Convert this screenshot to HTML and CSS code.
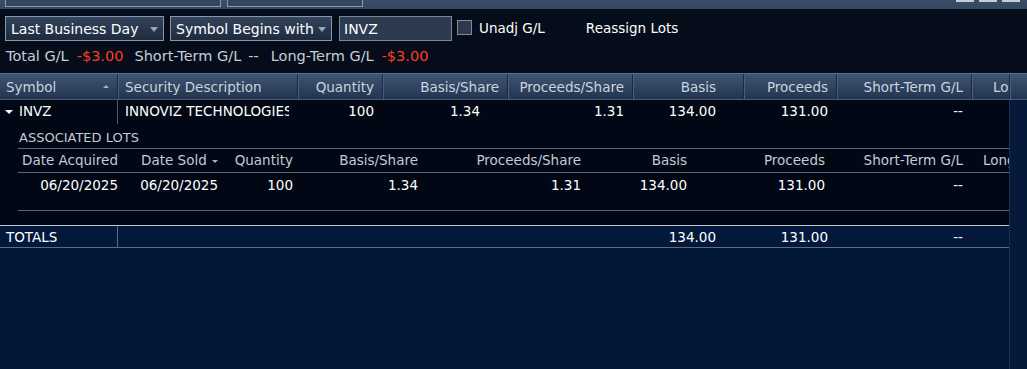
FILE: index.html
```html
<!DOCTYPE html>
<html lang="en">
<head>
<meta charset="utf-8">
<title>Realized G/L</title>
<link rel="stylesheet" href="styles.css">
</head>
<body>
<div class="topbar">
	<div class="tab t1"></div>
	<div class="tab t2"></div>
	<div class="winbtns"><i></i><i></i><i></i></div>
</div>

<div class="toolbar">
	<div class="dd dd1">Last Business Day <b class="caret"></b></div>
	<div class="dd dd2">Symbol Begins with <b class="caret"></b></div>
	<div class="txt">INVZ</div>
	<label class="chk"><i></i> Unadj G/L</label>
	<span class="link">Reassign Lots</span>
</div>

<div class="summary">
	<span>Total G/L</span><em>-$3.00</em>
	<span>Short-Term G/L</span><span class="dash">--</span>
	<span>Long-Term G/L</span><em>-$3.00</em>
</div>

<div class="hdr grid">
	<div class="c l">Symbol <b class="up"></b></div>
	<div class="c l">Security Description</div>
	<div class="c">Quantity</div>
	<div class="c">Basis/Share</div>
	<div class="c">Proceeds/Share</div>
	<div class="c p27">Basis</div>
	<div class="c">Proceeds</div>
	<div class="c">Short-Term G/L</div>
	<div class="c l clip lt">Long-Term G/L</div>
	<div class="c"></div>
</div>

<div class="area">
	<div class="body">
		<div class="row grid">
			<div class="c l sym"><b class="down"></b>INVZ</div>
			<div class="c l clip desc">INNOVIZ TECHNOLOGIES</div>
			<div class="c">100</div>
			<div class="c p27">1.34</div>
			<div class="c">1.31</div>
			<div class="c p27">134.00</div>
			<div class="c">131.00</div>
			<div class="c">--</div>
			<div class="c"></div>
		</div>

		<div class="lots">
			<div class="lots-title">ASSOCIATED LOTS</div>
			<div class="sub sub-hdr">
				<div class="c">Date Acquired</div>
				<div class="c">Date Sold <b class="dn"></b></div>
				<div class="c">Quantity</div>
				<div class="c">Basis/Share</div>
				<div class="c">Proceeds/Share</div>
				<div class="c">Basis</div>
				<div class="c">Proceeds</div>
				<div class="c">Short-Term G/L</div>
				<div class="c l clip long">Long-Term G/L</div>
			</div>
			<div class="sub sub-row">
				<div class="c">06/20/2025</div>
				<div class="c">06/20/2025</div>
				<div class="c">100</div>
				<div class="c">1.34</div>
				<div class="c">1.31</div>
				<div class="c">134.00</div>
				<div class="c">131.00</div>
				<div class="c">--</div>
				<div class="c"></div>
			</div>
			<div class="lots-end"></div>
		</div>

		<div class="totals grid">
			<div class="c l">TOTALS</div>
			<div class="c"></div>
			<div class="c"></div>
			<div class="c"></div>
			<div class="c"></div>
			<div class="c p27">134.00</div>
			<div class="c">131.00</div>
			<div class="c">--</div>
			<div class="c"></div>
		</div>
	</div>
	<div class="vscroll"></div>
</div>
</body>
</html>
```

FILE: styles.css
```css
*{box-sizing: border-box;}
html, body{height: 100%;}
body{
	margin: 0;
	font-family: 'DejaVu Sans', Verdana, sans-serif;
	font-size: 13.5px;
	color: #fff;
	background: #020d1e;
	overflow: hidden;
}

/* window strip */
.topbar{
	height: 9px;
	background: linear-gradient(#3a4e68, #34475f);
	display: flex;
}
.tab{
	height: 7px;
	border: 1px solid #8d98a6;
	border-top: 0;
	background: #33465f;
}
.t1{margin-left: 5px; width: 216px;}
.t2{margin-left: 6px; width: 136px;}
.winbtns{
	margin-left: auto;
	margin-right: 7px;
	display: flex;
	gap: 5px;
}
.winbtns i{
	display: block;
	width: 18px;
	height: 2px;
	background: #c9cdd3;
}

/* controls */
.toolbar{
	background: #050d1a;
	display: flex;
	align-items: center;
	padding: 7px 0 0 5px;
	height: 32px;
	font-size: 14px;
}
.dd{
	height: 25px;
	padding: 0 0 0 5px;
	line-height: 24px;
	border: 1px solid #8995a5;
	background: linear-gradient(#33445c, #1e2b3f);
	position: relative;
}
.dd1{width: 159px;}
.dd2{width: 162px; margin-left: 6px;}
.caret{
	position: absolute;
	right: 5px; top: 10px;
	border: 4px solid transparent;
	border-top: 5px solid #99a3b0;
	border-bottom: 0;
}
.txt{
	margin-left: 7px;
	width: 113px;
	height: 25px;
	line-height: 24px;
	padding-left: 4px;
	border: 1px solid #7c8696;
	background: #2d3b50;
}
.chk{
	display: flex;
	align-items: center;
	margin-left: 5px;
	margin-top: -2px;
	font-size: 13.5px;
}
.chk i{
	display: block;
	width: 15px;
	height: 15px;
	border: 1px solid #7f8998;
	background: #2d3a4d;
	margin-right: 7px;
}
.link{margin-left: 41px; margin-top: -2px; font-size: 13.5px;}

.summary{
	background: #050d1a;
	height: 32px;
	padding: 7px 0 0 6px;
	color: #c6cdd6;
	font-size: 14.5px;
	display: flex;
}
.summary em{font-style: normal; color: #ff3b24; margin: 0 11px 0 8px;}
.summary .dash{margin: 0 12px 0 7px;}

/* grid */
.grid{
	display: grid;
	grid-template-columns: 117px 180px 85px 125px 125px 111px 93px 135px 38px 18px;
}
.c{
	text-align: right;
	padding-right: 8px;
	white-space: nowrap;
	overflow: hidden;
}
.c.l{text-align: left; padding: 0 0 0 6px;}
.c.p27{padding-right: 27px;}
.clip{text-overflow: clip;}

.hdr{
	height: 27px;
	border-top: 1px solid #5b6f8c;
	background: linear-gradient(#3f5576, #23344d);
	color: #c9d3df;
	line-height: 26px;
	border-bottom: 1px solid #4a5d78;
}
.hdr .c{border-left: 1px solid #1a2a42; box-shadow: inset 1px 0 #4b6080;}
.hdr .c:first-child{border-left: 0; box-shadow: none; position: relative;}
.hdr .c.l + .c.l{padding-left: 7px;}
.hdr .c.lt{padding-left: 21px;}
.up{
	position: absolute;
	right: 8px; top: 11px;
	border: 3px solid transparent;
	border-bottom: 3px solid #a8b2c0;
	border-top: 0;
}

.area{display: flex; height: calc(100% - 100px);}
.body{width: 1009px; background: #021735;}
.vscroll{
	flex: 1;
	background: #06193a;
	border-left: 1px solid #1b2e4c;
}

.row{
	grid-template-columns: 117px 180px 85px 125px 125px 111px 93px 135px 38px;
	height: 24px;
	line-height: 23px;
	background: #010714;
}
.row .desc{
	border-left: 1px solid #4d5a6c;
	border-right: 8px solid transparent;
	padding: 0 0 0 7px;
}
.sym{position: relative; padding-left: 19px !important;}
.down{
	position: absolute;
	left: 5px; top: 10px;
	border: 4px solid transparent;
	border-top: 4px solid #fff;
	border-bottom: 0;
}

.lots{
	background: #010714;
	padding-left: 18px;
	padding-bottom: 14px;
}
.lots-title{
	height: 24px;
	line-height: 28px;
	padding-left: 1px;
	font-size: 13px;
	color: #c3cbd6;
}
.sub{
	display: grid;
	grid-template-columns: 105px 100px 75px 125px 163px 106px 138px 138px 41px;
}
.sub .c{padding-right: 5px;}
.sub-hdr{
	border-top: 1px solid #5c6777;
	border-bottom: 1px solid #5c6777;
	height: 25px;
	line-height: 23px;
	color: #c3cbd6;
}
.sub-hdr .long{padding-left: 15px;}
.dn{
	display: inline-block;
	vertical-align: middle;
	margin-left: 1px;
	border: 3px solid transparent;
	border-top: 3px solid #a8b2c0;
	border-bottom: 0;
}
.sub-row{height: 23px; line-height: 24px;}
.lots-end{height: 1px; background: #5c6777; margin-top: 14px;}

.totals{
	grid-template-columns: 117px 180px 85px 125px 125px 111px 93px 135px 38px;
	height: 23px;
	border-top: 1px solid #bcc5d1;
	border-bottom: 1px solid #5d6a80;
	background: #03183a;
	line-height: 22px;
}
.totals .c:nth-child(2){border-left: 1px solid #5d6a80;}
```
